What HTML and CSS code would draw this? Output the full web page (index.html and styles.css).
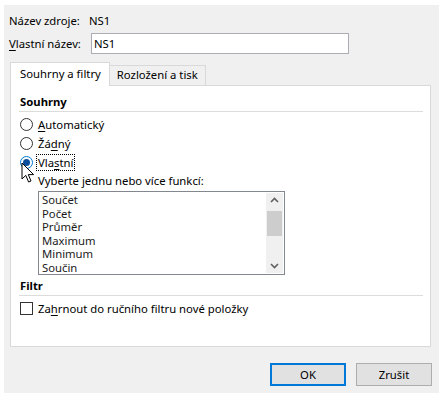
FILE: index.html
```html
<!DOCTYPE html>
<html lang="cs">
<head>
    <meta charset="UTF-8">
    <title>Nastavení pole</title>
    <link rel="stylesheet" href="styles.css">
</head>
<body>
    <div class="dialog">
        <div class="radek">
            <span class="popis">Název zdroje:</span>
            <span>NS1</span>
        </div>
        <div class="radek radek-vstup">
            <label class="popis-vstup" for="nazev"><u>V</u>lastní název:</label>
            <input id="nazev" class="vstup" type="text" value="NS1">
        </div>

        <div class="zalozky">
            <div class="zalozka aktivni">Souhrny a filtry</div>
            <div class="zalozka">Rozložení a tisk</div>
        </div>

        <div class="panel">
            <div class="sekce">Souhrny</div>
            <div class="volba">
                <span class="radio"></span>
                <span><u>A</u>utomatický</span>
            </div>
            <div class="volba">
                <span class="radio"></span>
                <span>Žá<u>d</u>ný</span>
            </div>
            <div class="volba">
                <span class="radio vybrane"></span>
                <span class="fokus">Vla<u>s</u>tní</span>
            </div>
            <div class="vyberte">Vyberte jednu nebo více funkcí:</div>
            <div class="seznam">
                <div class="polozky">
                    <div>Součet</div>
                    <div>Počet</div>
                    <div>Průměr</div>
                    <div>Maximum</div>
                    <div>Minimum</div>
                    <div>Součin</div>
                </div>
                <div class="posuvnik">
                    <svg class="sipka" width="17" height="14" viewBox="0 0 17 14"><path d="M5 9 L8.5 5.5 L12 9" fill="none" stroke="#606060" stroke-width="1.6"/></svg>
                    <div class="jezdec"></div>
                    <div class="mezera"></div>
                    <svg class="sipka" width="17" height="14" viewBox="0 0 17 14"><path d="M5 5 L8.5 8.5 L12 5" fill="none" stroke="#606060" stroke-width="1.6"/></svg>
                </div>
            </div>

            <div class="sekce sekce-filtr">Filtr</div>
            <div class="volba">
                <span class="zaskrt"></span>
                <span>Za<u>h</u>rnout do ručního filtru nové položky</span>
            </div>

            <svg class="kurzor" width="14" height="22" viewBox="0 0 14 22">
                <path d="M1 1 L1 17 L4.8 13.4 L7.6 20 L10 19 L7.3 12.6 L12.6 12.6 Z" fill="#fff" stroke="#000" stroke-width="1" stroke-linejoin="round"/>
            </svg>
        </div>

        <div class="tlacitka">
            <button class="tlacitko vychozi">OK</button>
            <button class="tlacitko">Zrušit</button>
        </div>
    </div>
</body>
</html>
```

FILE: styles.css
```css
* {
    box-sizing: border-box;
    margin: 0;
    padding: 0;
}

body {
    background: #fff;
    font-family: "Segoe UI", "Noto Sans", sans-serif;
    font-size: 11.3px;
    color: #000;
}

u {
    text-decoration-thickness: 1px;
    text-underline-offset: 2px;
}

.dialog {
    width: 435px;
    height: 388px;
    margin: 5px 0 0 4px;
    padding: 7px 0 0 5px;
    background: #f0f0f0;
    position: relative;
}

.radek {
    display: flex;
    align-items: center;
    height: 16px;
}

.popis {
    width: 80px;
}

.radek-vstup {
    margin-top: 5px;
    height: 21px;
}

.popis-vstup {
    width: 82px;
}

.vstup {
    width: 258px;
    height: 21px;
    border: 1px solid #abadb3;
    padding: 0 2px;
    font: inherit;
    background: #fff;
    outline: none;
}

.zalozky {
    display: flex;
    align-items: flex-end;
    margin: 8px 0 0 1px;
    height: 23px;
}

.zalozka {
    height: 20px;
    padding: 0 7px;
    border: 1px solid #d9d9d9;
    border-bottom: none;
    line-height: 18px;
    background: #f0f0f0;
}

.aktivni {
    height: 24px;
    padding: 0 8px 0 9px;
    background: #fff;
    position: relative;
    z-index: 1;
    margin-bottom: -1px;
    line-height: 22px;
}

.zalozka + .zalozka {
    border-left: none;
}

.panel {
    margin-left: 1px;
    width: 421px;
    height: 262px;
    border: 1px solid #d9d9d9;
    background: #fff;
    padding: 8px 7px 0 8px;
    position: relative;
}

.sekce {
    font-weight: bold;
    height: 18px;
    line-height: 16px;
    border-bottom: 1px solid #dcdcdc;
    margin-bottom: 3px;
    padding-left: 1px;
}

.sekce-filtr {
    margin-top: 3px;
}

.volba {
    display: flex;
    align-items: center;
    gap: 5px;
    height: 19px;
    padding-left: 1px;
}

.radio {
    width: 13px;
    height: 13px;
    border: 1px solid #333;
    border-radius: 50%;
    background: #fff;
    position: relative;
}

.vybrane {
    border-color: #0078d7;
}

.vybrane::after {
    content: "";
    position: absolute;
    left: 2px;
    top: 2px;
    width: 7px;
    height: 7px;
    border-radius: 50%;
    background: #0a4f9c;
}

.fokus {
    outline: 1px dotted #000;
    outline-offset: 0;
    padding: 0 1px;
    margin-left: -1px;
    line-height: 15px;
}

.vyberte {
    margin: 1px 0 2px 19px;
    height: 16px;
    line-height: 16px;
}

.seznam {
    display: flex;
    margin-left: 19px;
    width: 247px;
    height: 84px;
    border: 1px solid #828790;
    background: #fff;
}

.polozky {
    flex: 1;
    padding: 1px 0 0 3px;
    line-height: 13.5px;
    color: #1a1a1a;
}

.polozky div {
    height: 13.5px;
}

.posuvnik {
    width: 17px;
    margin: 1px 1px 1px 0;
    background: #f0f0f0;
    display: flex;
    flex-direction: column;
}

.sipka {
    display: block;
}

.jezdec {
    height: 25px;
    margin: 4px 0 0 1px;
    width: 15px;
    background: #cdcdcd;
}

.mezera {
    flex: 1;
}

.zaskrt {
    width: 13px;
    height: 13px;
    border: 1px solid #333;
    background: #fff;
}

.kurzor {
    position: absolute;
    left: 10px;
    top: 76px;
}

.tlacitka {
    display: flex;
    justify-content: flex-end;
    gap: 10px;
    padding-right: 7px;
    margin-top: 16px;
}

.tlacitko {
    width: 76px;
    height: 23px;
    border: 1px solid #adadad;
    background: #e1e1e1;
    font: inherit;
    color: #000;
}

.vychozi {
    border: 2px solid #0078d7;
}
```
